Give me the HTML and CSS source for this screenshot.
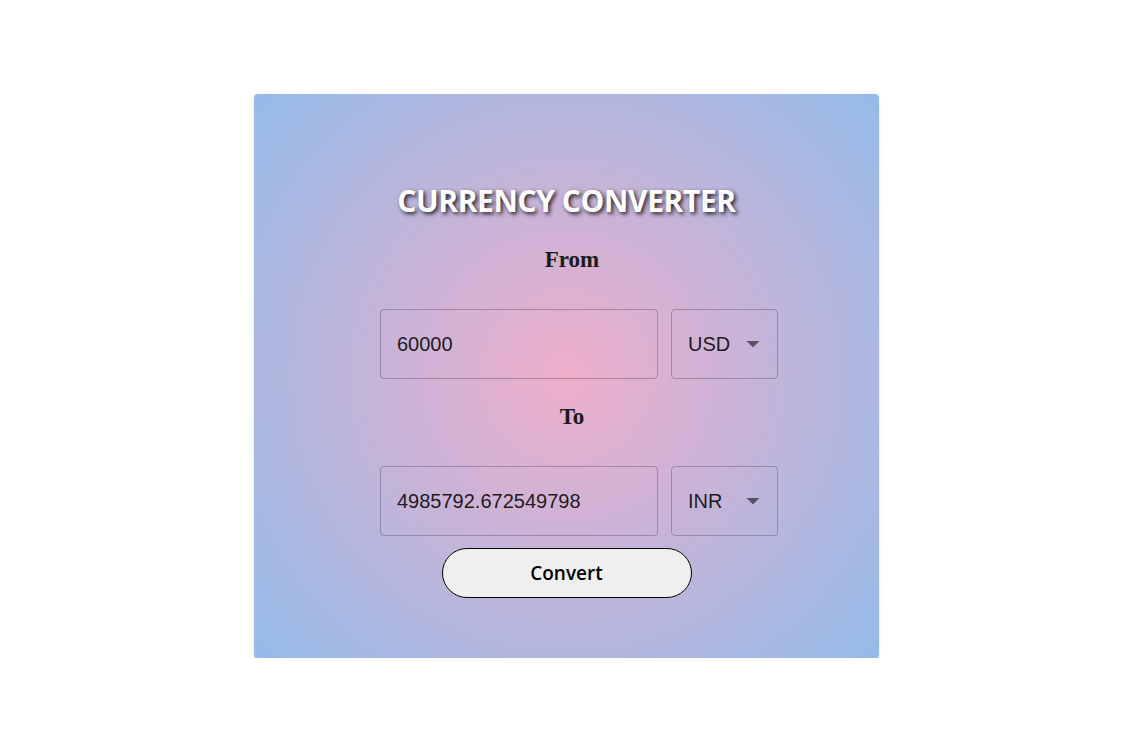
FILE: index.html
```html
<!DOCTYPE html>
<html lang="en">
<head>
<meta charset="utf-8">
<title>Currency Converter</title>
<link rel="stylesheet" href="styles.css">
</head>
<body>
<div class="page">
  <div class="card">
    <h1 class="title">CURRENCY CONVERTER</h1>
    <h2 class="label label-from">From</h2>
    <div class="row">
      <div class="field field-amount"><span class="value">60000</span></div>
      <div class="field field-select">
        <span class="value">USD</span>
        <svg class="arrow" width="14" height="7" viewBox="0 0 14 7"><path d="M0.5 0 L13.5 0 L7 6.5 Z"/></svg>
      </div>
    </div>
    <h2 class="label label-to">To</h2>
    <div class="row">
      <div class="field field-amount"><span class="value">4985792.672549798</span></div>
      <div class="field field-select">
        <span class="value">INR</span>
        <svg class="arrow" width="14" height="7" viewBox="0 0 14 7"><path d="M0.5 0 L13.5 0 L7 6.5 Z"/></svg>
      </div>
    </div>
    <button class="convert" type="button">Convert</button>
  </div>
</div>
</body>
</html>
```

FILE: styles.css
```css
html, body {
  margin: 0;
  padding: 0;
  background: #ffffff;
}

.page {
  display: flex;
  justify-content: center;
  padding: 94px 8px 0 0;
}

.card {
  box-sizing: border-box;
  width: 625px;
  height: 564px;
  padding-top: 87px;
  border-radius: 4px;
  background: radial-gradient(circle, #eeaeca 0%, #94bbe9 100%);
  box-shadow: 0 2px 1px -1px rgba(0,0,0,0.2), 0 1px 1px 0 rgba(0,0,0,0.14), 0 1px 3px 0 rgba(0,0,0,0.12);
  display: flex;
  flex-direction: column;
  align-items: center;
}

.title {
  margin: 0;
  font-family: "Open Sans", "Noto Sans", sans-serif;
  font-weight: 700;
  font-size: 30px;
  letter-spacing: -0.4px;
  line-height: 40px;
  color: #ffffff;
  text-shadow: 2px 2px 4px rgba(0,0,0,0.85);
}

.label {
  margin: 0;
  font-family: "Liberation Serif", "Times New Roman", serif;
  font-weight: 700;
  font-size: 23px;
  line-height: 30px;
  color: #1c1c1c;
  margin-left: 11px;
}

.label-from {
  margin-top: 24px;
  margin-bottom: 34px;
}

.label-to {
  margin-top: 23px;
  margin-bottom: 34px;
}

.row {
  display: flex;
  gap: 13px;
  margin-left: 25px;
}

.field {
  box-sizing: border-box;
  height: 70px;
  border: 1px solid rgba(0,0,0,0.23);
  border-radius: 4px;
  display: flex;
  align-items: center;
  padding-left: 16px;
  font-family: "Liberation Sans", Arial, sans-serif;
  font-size: 20px;
  color: rgba(0,0,0,0.87);
}

.field-amount {
  width: 278px;
}

.field-select {
  width: 107px;
  justify-content: space-between;
  padding-right: 17px;
}

.arrow {
  fill: rgba(0,0,0,0.54);
  margin-top: 1px;
}

.convert {
  box-sizing: border-box;
  margin-top: 12px;
  width: 250px;
  height: 50px;
  border: 1px solid #000000;
  border-radius: 25px;
  background: #efefef;
  font-family: "Open Sans", "Noto Sans", sans-serif;
  font-weight: 600;
  font-size: 19px;
  color: #000000;
  padding: 0;
}
```
